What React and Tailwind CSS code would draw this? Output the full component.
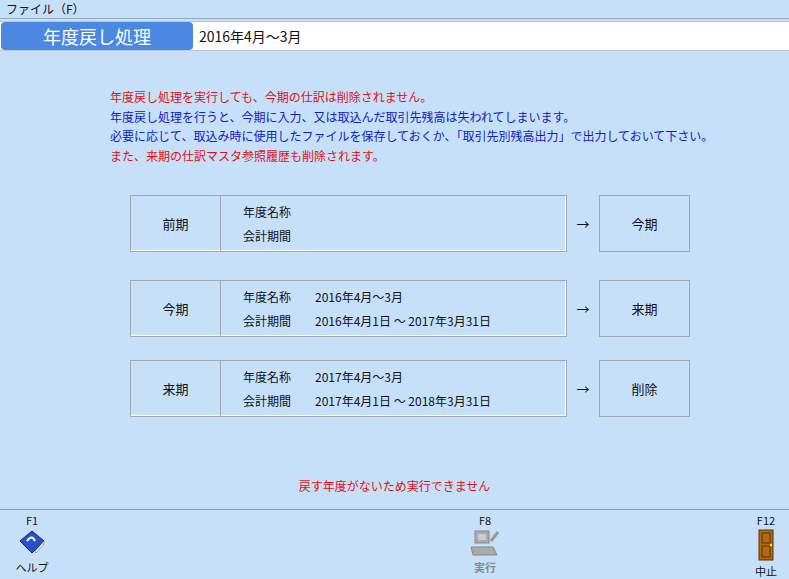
const F = {fontFamily:'"MS UI Gothic","Noto Sans CJK JP",sans-serif'};
function Row({label,v1,v2,target}){
  return (
    <div className="flex items-center h-[57px]">
      <div className="flex w-[437px] h-full border border-[#a0a8b4] shadow-[inset_-1px_-1px_0_#fff]">
        <div className="w-[90px] border-r border-[#a0a8b4] flex items-center justify-center text-[13px]">{label}</div>
        <div className="flex flex-col justify-center gap-[6px] pl-[22px] text-[12px]">
          <div className="flex"><span className="w-[72px]">年度名称</span><span>{v1}</span></div>
          <div className="flex"><span className="w-[72px]">会計期間</span><span>{v2}</span></div>
        </div>
      </div>
      <div className="w-[32px] text-center text-[13px]">→</div>
      <div className="w-[91px] h-full border border-[#a0a8b4] flex items-center justify-center text-[13px]">{target}</div>
    </div>
  );
}
export default function App(){
  return (
    <div style={F} className="w-[789px] h-[579px] bg-[#c6e0fa] flex flex-col text-[#111] overflow-hidden">
      <div className="h-[22px] flex items-center px-[6px] text-[12px] border-b border-[#9ab]">ファイル（F）</div>
      <div className="mt-[2px] h-[34px] bg-white flex items-center border-y border-[#b8c8d8] px-[1px]">
        <div className="w-[192px] h-[28px] bg-[#4a88e2] rounded-[4px] text-white text-[18px] flex items-center justify-center">年度戻し処理</div>
        <div className="ml-[6px] text-[14px]">2016年4月～3月</div>
      </div>
      <div className="pl-[110px] pt-[36px] text-[12px] leading-[19.5px]">
        <div className="text-[#e01010]">年度戻し処理を実行しても、今期の仕訳は削除されません。</div>
        <div className="text-[#1020c0]">年度戻し処理を行うと、今期に入力、又は取込んだ取引先残高は失われてしまいます。</div>
        <div className="text-[#1020c0]">必要に応じて、取込み時に使用したファイルを保存しておくか、「取引先別残高出力」で出力しておいて下さい。</div>
        <div className="text-[#e01010]">また、来期の仕訳マスタ参照履歴も削除されます。</div>
      </div>
      <div className="pl-[130px] pt-[30px] flex flex-col">
        <Row label="前期" v1="" v2="" target="今期"/>
        <div className="mt-[28px]"><Row label="今期" v1="2016年4月～3月" v2="2016年4月1日 ～ 2017年3月31日" target="来期"/></div>
        <div className="mt-[23px]"><Row label="来期" v1="2017年4月～3月" v2="2017年4月1日 ～ 2018年3月31日" target="削除"/></div>
      </div>
      <div className="mt-[60px] text-center text-[12px] text-[#e01010]">戻す年度がないため実行できません</div>
      <div className="mt-[14px] border-t border-[#8a9aaa] flex-1 flex px-[10px] text-[11px]">
        <div className="flex flex-col items-center w-[44px] pt-[2px]">
          <div>F1</div>
          <svg width="30" height="26" viewBox="0 0 30 26"><path d="M15 2 L27 12 L15 24 L3 12Z" fill="#2850c8" stroke="#102070"/><path d="M10 12 q5 -7 8 0" stroke="#fff" strokeWidth="2" fill="none"/><path d="M18 22 L27 12 L27 15 L19 24Z" fill="#eee" stroke="#555" strokeWidth=".5"/></svg>
          <div className="mt-[4px]">ヘルプ</div>
        </div>
        <div className="flex flex-col items-center w-[44px] pt-[2px] text-[#888] ml-[409px]">
          <div className="text-[#111]">F8</div>
          <svg width="32" height="30" viewBox="0 0 32 30"><rect x="6" y="2" width="14" height="12" fill="#aaa" stroke="#888"/><rect x="9" y="5" width="8" height="6" fill="#ccc"/><path d="M2 18 H24 L28 26 H4Z" fill="#aaa" stroke="#888"/><path d="M22 12 L29 3" stroke="#999" strokeWidth="3"/></svg>
          <div className="font-bold">実行</div>
        </div>
        <div className="flex flex-col items-center w-[30px] pt-[2px] ml-auto mr-[-2px]">
          <div>F12</div>
          <svg width="18" height="32" viewBox="0 0 18 32"><rect x="2" y="1" width="14" height="30" fill="#b06a10" stroke="#5a3000"/><rect x="5" y="4" width="8" height="10" fill="none" stroke="#5a3000"/><rect x="5" y="17" width="8" height="11" fill="none" stroke="#5a3000"/><circle cx="14" cy="16" r="1.2" fill="#ff0"/></svg>
          <div className="mt-[2px]">中止</div>
        </div>
      </div>
    </div>
  );
}
